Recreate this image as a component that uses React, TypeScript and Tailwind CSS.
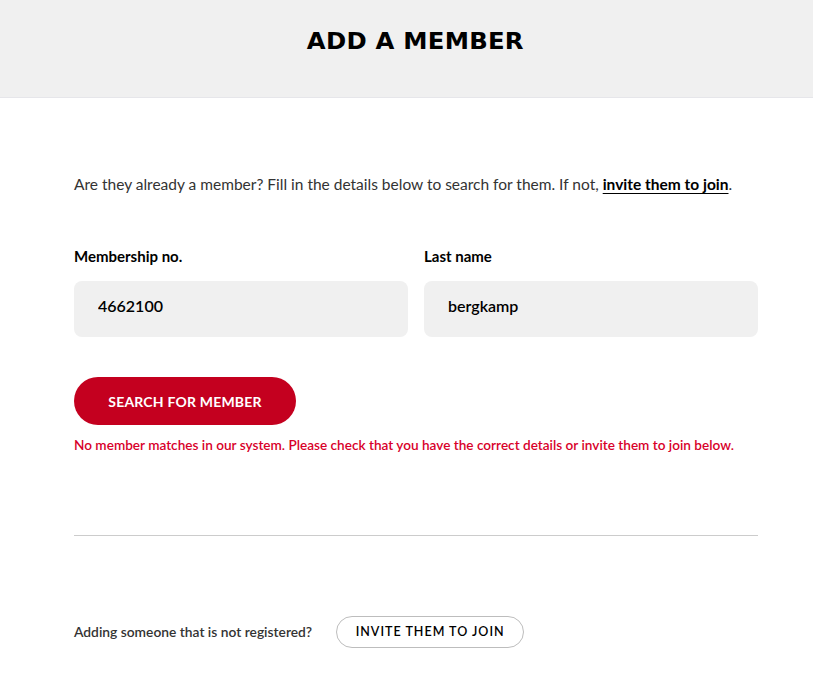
export default function App() {
  return (
    <div className="min-h-screen bg-white font-['Lato','Noto_Sans',sans-serif] text-black">
      <header className="flex h-[98px] items-center justify-center border-b border-[#e6e6ea] bg-[#f0f0f0] pl-[18px]">
        <h1 className="pb-[14px] font-['DejaVu_Sans',sans-serif] text-[23px] font-bold leading-none tracking-[0.2px] scale-x-[1.06]">
          ADD A MEMBER
        </h1>
      </header>

      <main className="w-[684px] pl-[74px] box-content">
        <p className="mt-[75px] text-[15.5px] leading-[22px] text-[#333]">
          Are they already a member? Fill in the details below to search for them. If not,{" "}
          <a href="#" className="font-bold text-black underline underline-offset-[3px]">
            invite them to join
          </a>
          .
        </p>

        <div className="mt-[50px] grid grid-cols-2 gap-4">
          <label className="flex flex-col">
            <span className="text-[15px] font-bold leading-[22px]">Membership no.</span>
            <input
              defaultValue="4662100"
              className="mt-[14px] h-[56px] rounded-[8px] bg-[#f0f0f0] px-6 pb-[8px] text-[16px] font-semibold outline-none"
            />
          </label>
          <label className="flex flex-col">
            <span className="text-[15px] font-bold leading-[22px]">Last name</span>
            <input
              defaultValue="bergkamp"
              className="mt-[14px] h-[56px] rounded-[8px] bg-[#f0f0f0] px-6 pb-[8px] text-[16px] font-semibold outline-none"
            />
          </label>
        </div>

        <button className="mt-[40px] h-[48px] w-[222px] rounded-full bg-[#c4001f] text-[14px] font-bold tracking-[0.2px] text-white">
          SEARCH FOR MEMBER
        </button>
        <p className="mt-[11px] text-[13.6px] font-semibold leading-[18px] text-[#d8002a]">
          No member matches in our system. Please check that you have the correct details or invite them to join below.
        </p>

        <hr className="mt-[81px] border-t border-[#cccccc]" />

        <div className="mt-[80px] flex items-center gap-[24px]">
          <span className="text-[13.8px] font-semibold text-[#333]">Adding someone that is not registered?</span>
          <button className="h-[32px] w-[188px] rounded-full border border-[#bdbdbd] bg-white text-[12.5px] font-semibold tracking-[1px]">
            INVITE THEM TO JOIN
          </button>
        </div>
      </main>
    </div>
  );
}
